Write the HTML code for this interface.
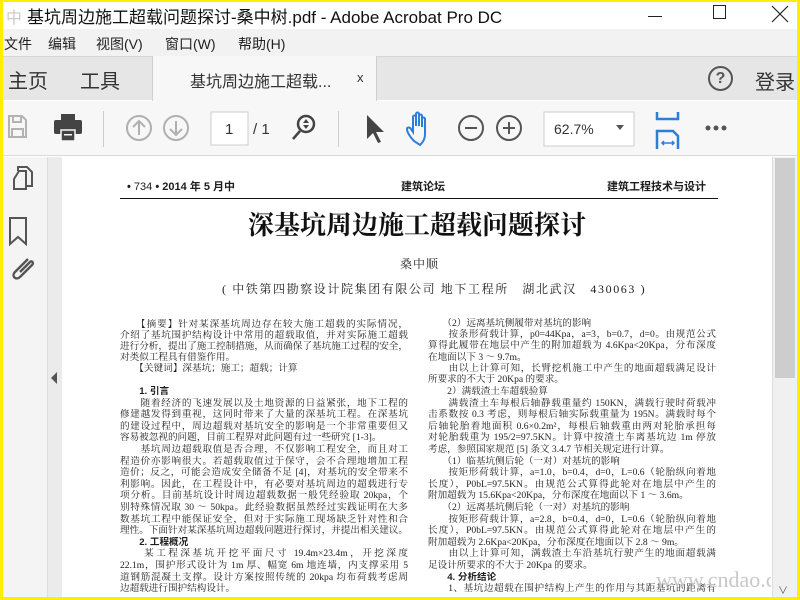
<!DOCTYPE html>
<html><head><meta charset="utf-8"><style>
*{margin:0;padding:0;box-sizing:border-box}
body{width:800px;height:600px;overflow:hidden;background:#ffee00;position:relative;font-family:"Liberation Sans","Noto Sans CJK SC",sans-serif}
.a{position:absolute}
.ui{color:#333}
.doc{font-family:"Liberation Serif","Noto Serif CJK SC",serif;color:#1e1e1e;font-size:9.6px;line-height:12px}
.l{position:absolute;width:288px;white-space:nowrap;text-align:justify;text-align-last:justify;overflow:hidden}
.e{text-align-last:left}
</style></head><body>
<div class="a" style="left:3px;top:2px;width:794px;height:595px;background:#fff"></div>
<div class="a ui" style="left:27px;top:3px;font-size:17px;color:#111">基坑周边施工超载问题探讨-桑中树.pdf - Adobe Acrobat Pro DC</div>
<div class="a" style="left:6px;top:4px;font-size:16px;color:#cfc9c0">中</div>
<div class="a" style="left:648px;top:16px;width:14px;height:1px;background:#222"></div>
<div class="a" style="left:713px;top:5px;width:13px;height:14px;border:1px solid #222"></div>
<svg class="a" style="left:770px;top:4px" width="20" height="20"><path d="M2 2l16 16M18 2L2 18" stroke="#222" stroke-width="1.2"/></svg>
<div class="a" style="left:3px;top:29px;width:794px;height:27px;background:#f2f2f2"></div>
<div class="a ui" style="left:4px;top:34px;font-size:14px;color:#222">文件</div>
<div class="a ui" style="left:48px;top:34px;font-size:14px;color:#222">编辑</div>
<div class="a ui" style="left:96px;top:34px;font-size:14px;color:#222">视图(V)</div>
<div class="a ui" style="left:165px;top:34px;font-size:14px;color:#222">窗口(W)</div>
<div class="a ui" style="left:238px;top:34px;font-size:14px;color:#222">帮助(H)</div>
<div class="a" style="left:3px;top:56px;width:794px;height:44px;background:#e6e6e6;border-top:1px solid #d6d6d6"></div>
<div class="a" style="left:152px;top:56px;width:225px;height:46px;background:#f7f7f7;border-left:1px solid #d0d0d0;border-right:1px solid #d0d0d0"></div>
<div class="a" style="left:8px;top:65px;font-size:20px;color:#333">主页</div>
<div class="a" style="left:80px;top:65px;font-size:20px;color:#333">工具</div>
<div class="a" style="left:190px;top:68px;font-size:16px;color:#333">基坑周边施工超载...</div>
<div class="a" style="left:357px;top:70px;font-size:13px;color:#333">x</div>
<div class="a" style="left:708px;top:66px;width:25px;height:25px;border:2px solid #555;border-radius:50%;text-align:center;font-size:16px;line-height:21px;color:#555;font-weight:bold">?</div>
<div class="a" style="left:755px;top:66px;font-size:20px;color:#333">登录</div>
<div class="a" style="left:3px;top:101px;width:794px;height:55px;background:#f7f7f7;border-bottom:1px solid #d9d9d9"></div>
<svg class="a" style="left:0;top:101px" width="800" height="55">
<g fill="none" stroke="#b3b3b3" stroke-width="2"><path d="M9 15h13l4 4v17H9z"/><path d="M13 15v6h8v-6M12 36v-8h11v8"/></g>
<g fill="#444"><rect x="61" y="13" width="14" height="7"/><rect x="54" y="19" width="28" height="14" rx="2"/><rect x="61" y="29" width="14" height="11" fill="#444" stroke="#f7f7f7" stroke-width="1.5"/><rect x="64" y="33" width="8" height="1.5" fill="#f7f7f7"/></g>
<rect x="103" y="10" width="1" height="36" fill="#ccc"/>
<g fill="none" stroke="#b0b0b0" stroke-width="2"><circle cx="139" cy="27" r="12"/><path d="M139 34V20M133 26l6-6 6 6"/><circle cx="176" cy="27" r="12"/><path d="M176 20v14M170 28l6 6 6-6"/></g>
<rect x="211" y="11" width="37" height="33" fill="#fff" stroke="#ccc"/>
<text x="225" y="33" font-size="15" fill="#333" font-family="Liberation Sans">1</text>
<text x="253" y="33" font-size="15" fill="#333" font-family="Liberation Sans">/ 1</text>
<g fill="none" stroke="#444" stroke-width="2.5"><circle cx="306" cy="23" r="8"/><path d="M300 30l-7 8"/></g>
<path d="M306 18l-3 4h6zM306 28l-3-4h6z" fill="#444"/>
<rect x="338" y="10" width="1" height="36" fill="#ccc"/>
<path d="M367 14v24l6-6 5 10 3-1-5-10h8z" fill="#444"/>
<path d="M414 40c-4-4-7-9-7-12 0-2 3-2 4 0l2 3V16c0-2 3-2 3 0v9-12c0-2 3-2 3 0v12-10c0-2 3-2 3 0v11-8c0-2 3-2 3 0v15c0 6-3 9-5 11z" fill="none" stroke="#2d7fd6" stroke-width="2"/>
<g fill="none" stroke="#555" stroke-width="2"><circle cx="471" cy="27" r="12"/><path d="M465 27h12"/><circle cx="509" cy="27" r="12"/><path d="M503 27h12M509 21v12"/></g>
<rect x="544" y="11" width="90" height="34" fill="#fff" stroke="#ccc"/>
<text x="554" y="33" font-size="14" fill="#333" font-family="Liberation Sans">62.7%</text>
<path d="M616 24h8l-4 5z" fill="#555"/>
<g fill="none" stroke="#2d7fd6" stroke-width="2.5"><path d="M657 11v7h21v-7"/><path d="M657 48V30h16l5 5v13"/><path d="M662 42h12M664 40l-2 2 2 2M672 40l2 2-2 2" stroke-width="1.5"/></g>
<g fill="#555"><circle cx="708" cy="27" r="2.5"/><circle cx="716" cy="27" r="2.5"/><circle cx="724" cy="27" r="2.5"/></g>
</svg>
<div class="a" style="left:3px;top:157px;width:45px;height:440px;background:#f4f4f4;border-right:1px solid #ddd"></div>
<div class="a" style="left:48px;top:157px;width:14px;height:440px;background:#ebebeb"></div>
<svg class="a" style="left:0;top:157px" width="62" height="440">
<g fill="none" stroke="#555" stroke-width="2"><path d="M14 22v10h12V14H19z"/><path d="M18 14v-4h9l5 5v14h-6"/></g>
<path d="M10 61V87l8-7 8 7V61z" fill="none" stroke="#555" stroke-width="2"/>
<path d="M28 102l-13 13c-4 4 1 9 5 5l12-12c2-2 0-5-2-3l-10 10" fill="none" stroke="#555" stroke-width="2.4"/>
<path d="M57 215v12l-6-6z" fill="#555"/>
</svg>
<div class="a" style="left:772px;top:157px;width:25px;height:440px;background:#f0f0f0;border-left:1px solid #ddd"></div>
<div class="a" style="left:775px;top:158px;width:20px;height:220px;background:#cdcdcd"></div>
<div class="doc">
<div class="a" style="left:127px;top:181px;font-family:'Liberation Sans','Noto Sans CJK SC',sans-serif;font-size:11px;font-weight:bold">• <span style="font-weight:normal">734</span> • 2014 年 5 月中</div>
<div class="a" style="left:401px;top:181px;font-family:'Liberation Sans','Noto Sans CJK SC',sans-serif;font-size:11px;font-weight:bold">建筑论坛</div>
<div class="a" style="left:607px;top:181px;font-family:'Liberation Sans','Noto Sans CJK SC',sans-serif;font-size:11px;font-weight:bold">建筑工程技术与设计</div>
<div class="a" style="left:120px;top:198px;width:598px;height:1px;background:#111"></div>
<div class="a" style="left:248px;top:210px;font-size:26px;line-height:32px;color:#111;font-weight:bold">深基坑周边施工超载问题探讨</div>
<div class="a" style="left:400px;top:258px;font-size:12px;letter-spacing:1px">桑中顺</div>
<div class="a" style="left:222px;top:283px;font-size:12px;letter-spacing:1.6px">( 中铁第四勘察设计院集团有限公司 地下工程所　湖北武汉　430063 )</div>

<div class="l" style="left:120px;top:319px">　　【摘要】针对某深基坑周边存在较大施工超载的实际情况，</div>
<div class="l" style="left:120px;top:330px">介绍了基坑围护结构设计中常用的超载取值，并对实际施工超载</div>
<div class="l" style="left:120px;top:341px">进行分析，提出了施工控制措施，从而确保了基坑施工过程的安全，</div>
<div class="l e" style="left:120px;top:352px">对类似工程具有借鉴作用。</div>
<div class="l e" style="left:120px;top:363px">　　【关键词】深基坑；施工；超载；计算</div>

<div class="l e" style="left:120px;top:386px">　　<b style="font-family:'Liberation Sans','Noto Sans CJK SC',sans-serif">1. 引言</b></div>
<div class="l" style="left:120px;top:398px">　　随着经济的飞速发展以及土地资源的日益紧张，地下工程的</div>
<div class="l" style="left:120px;top:409px">修建越发得到重视，这同时带来了大量的深基坑工程。在深基坑</div>
<div class="l" style="left:120px;top:421px">的建设过程中，周边超载对基坑安全的影响是一个非常重要但又</div>
<div class="l e" style="left:120px;top:432px">容易被忽视的问题，目前工程界对此问题有过一些研究 [1-3]。</div>
<div class="l" style="left:120px;top:444px">　　基坑周边超载取值是否合理，不仅影响工程安全，而且对工</div>
<div class="l" style="left:120px;top:456px">程造价亦影响很大。若超载取值过于保守，会不合理地增加工程</div>
<div class="l" style="left:120px;top:467px">造价；反之，可能会造成安全储备不足 [4]，对基坑的安全带来不</div>
<div class="l" style="left:120px;top:479px">利影响。因此，在工程设计中，有必要对基坑周边的超载进行专</div>
<div class="l" style="left:120px;top:490px">项分析。目前基坑设计时周边超载数据一般凭经验取 20kpa，个</div>
<div class="l" style="left:120px;top:502px">别特殊情况取 30 ～ 50kpa。此经验数据虽然经过实践证明在大多</div>
<div class="l" style="left:120px;top:514px">数基坑工程中能保证安全，但对于实际施工现场缺乏针对性和合</div>
<div class="l" style="left:120px;top:525px">理性。下面针对某深基坑周边超载问题进行探讨，并提出相关建议。</div>
<div class="l e" style="left:120px;top:537px">　　<b style="font-family:'Liberation Sans','Noto Sans CJK SC',sans-serif">2. 工程概况</b></div>
<div class="l" style="left:120px;top:548px">　　某工程深基坑开挖平面尺寸 19.4m×23.4m，开挖深度</div>
<div class="l" style="left:120px;top:560px">22.1m，围护形式设计为 1m 厚、幅宽 6m 地连墙，内支撑采用 5</div>
<div class="l" style="left:120px;top:572px">道钢筋混凝土支撑。设计方案按照传统的 20kpa 均布荷载考虑周</div>
<div class="l e" style="left:120px;top:583px">边超载进行围护结构设计。</div>

<div class="l e" style="left:428px;top:318px">　　（2）远离基坑侧履带对基坑的影响</div>
<div class="l" style="left:428px;top:329px">　　按条形荷载计算，p0=44Kpa，a=3，b=0.7，d=0。由规范公式</div>
<div class="l" style="left:428px;top:340px">算得此履带在地层中产生的附加超载为 4.6Kpa&lt;20Kpa，分布深度</div>
<div class="l e" style="left:428px;top:352px">在地面以下 3 ～ 9.7m。</div>
<div class="l" style="left:428px;top:363px">　　由以上计算可知，长臂挖机施工中产生的地面超载满足设计</div>
<div class="l e" style="left:428px;top:374px">所要求的不大于 20Kpa 的要求。</div>
<div class="l e" style="left:428px;top:386px">　　2）满载渣土车超载验算</div>
<div class="l" style="left:428px;top:398px">　　满载渣土车每根后轴静载重量约 150KN，满载行驶时荷载冲</div>
<div class="l" style="left:428px;top:409px">击系数按 0.3 考虑，则每根后轴实际载重量为 195N。满载时每个</div>
<div class="l" style="left:428px;top:421px">后轴轮胎着地面积 0.6×0.2m²，每根后轴载重由两对轮胎承担每</div>
<div class="l" style="left:428px;top:432px">对轮胎载重为 195/2=97.5KN。计算中按渣土车离基坑边 1m 停放</div>
<div class="l e" style="left:428px;top:444px">考虑，参照国家规范 [5] 条文 3.4.7 节相关规定进行计算。</div>
<div class="l e" style="left:428px;top:456px">　　（1）临基坑侧后轮（一对）对基坑的影响</div>
<div class="l" style="left:428px;top:467px">　　按矩形荷载计算，a=1.0，b=0.4，d=0，L=0.6（轮胎纵向着地</div>
<div class="l" style="left:428px;top:479px">长度），P0bL=97.5KN。由规范公式算得此轮对在地层中产生的</div>
<div class="l e" style="left:428px;top:490px">附加超载为 15.6Kpa&lt;20Kpa，分布深度在地面以下 1 ～ 3.6m。</div>
<div class="l e" style="left:428px;top:502px">　　（2）远离基坑侧后轮（一对）对基坑的影响</div>
<div class="l" style="left:428px;top:514px">　　按矩形荷载计算，a=2.8，b=0.4，d=0，L=0.6（轮胎纵向着地</div>
<div class="l" style="left:428px;top:525px">长度），P0bL=97.5KN。由规范公式算得此轮对在地层中产生的</div>
<div class="l e" style="left:428px;top:537px">附加超载为 2.6Kpa&lt;20Kpa，分布深度在地面以下 2.8 ～ 9m。</div>
<div class="l" style="left:428px;top:548px">　　由以上计算可知，满载渣土车沿基坑行驶产生的地面超载满</div>
<div class="l e" style="left:428px;top:560px">足设计所要求的不大于 20Kpa 的要求。</div>
<div class="l e" style="left:428px;top:572px">　　<b style="font-family:'Liberation Sans','Noto Sans CJK SC',sans-serif">4. 分析结论</b></div>
<div class="l" style="left:428px;top:583px">　　1、基坑边超载在围护结构上产生的作用与其距基坑的距离有</div>
</div>
<div class="a" style="left:656px;top:567px;width:115px;overflow:hidden;white-space:nowrap;font-family:'Liberation Serif',serif;font-size:22px;color:#c8c8c8">www.cndao.com</div>
<div class="a" style="left:778px;top:582px;font-size:10px;color:#555">∨</div>
<div class="a" style="left:0;top:597px;width:800px;height:3px;background:#ffee00"></div>
</body></html>
